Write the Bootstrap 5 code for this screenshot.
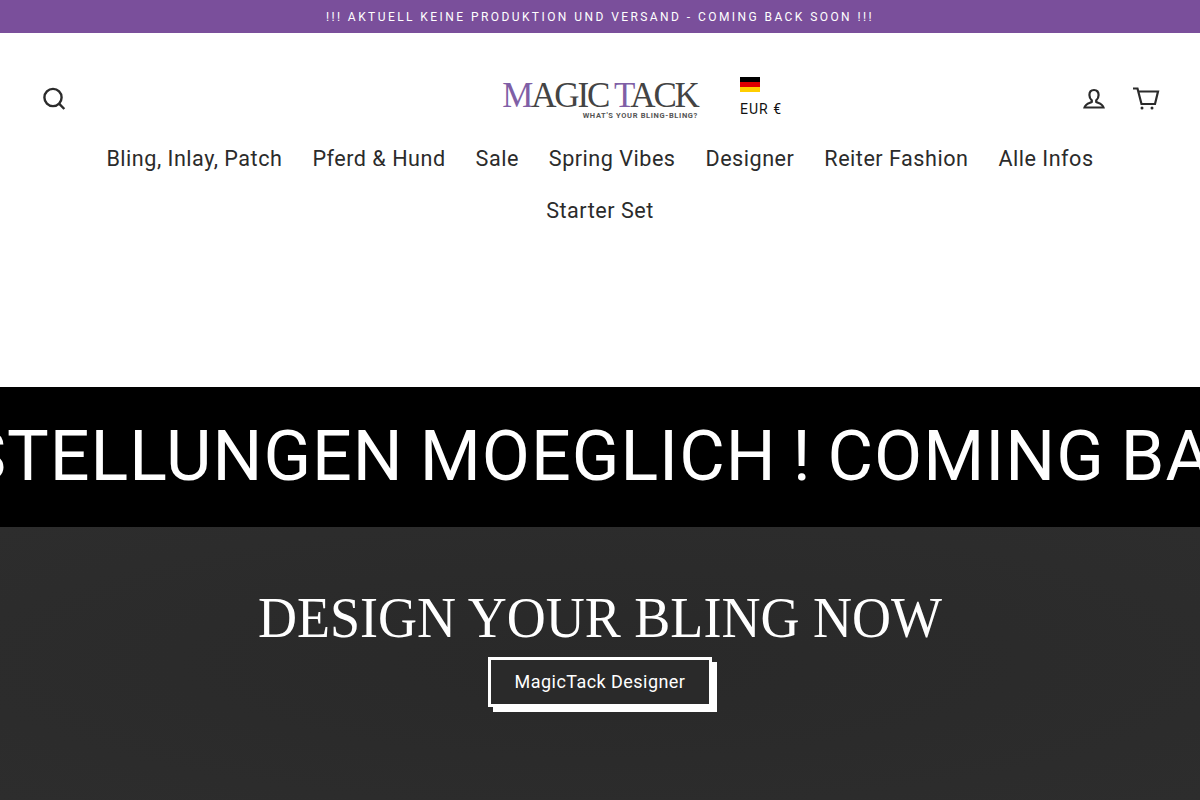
<!DOCTYPE html>
<html lang="de">
<head>
<meta charset="utf-8">
<title>Magic Tack</title>
<link href="https://cdn.jsdelivr.net/npm/bootstrap@5.3.0/dist/css/bootstrap.min.css" rel="stylesheet">
<style>
html,body{height:800px;overflow:hidden}
body{font-family:Roboto,"Liberation Sans",sans-serif;color:#2b2b2b;background:#fff}
.mt-announce{height:33px;background:#7a4f9b;color:#fff;font-size:12px;letter-spacing:2.43px;line-height:35px}
.mt-header{height:354px;padding:0 40px}
.mt-toprow{height:99px;padding-top:33px}
.mt-side{width:400px}
.mt-logo{width:200px;margin:0;color:#333;line-height:1}
.mt-logo-main{display:block;font-family:"Liberation Serif",serif;font-size:35px;line-height:30px;white-space:nowrap;letter-spacing:-2.2px;text-align:center;color:#444;margin-top:2px}
.mt-logo-main b{font-weight:400;color:#7f5fa6}
.mt-logo-tag{display:block;font-size:7.5px;font-weight:700;letter-spacing:.65px;text-align:right;color:#555;padding-right:2px;margin-top:1px}
.mt-locale{width:42px;margin-left:40px;margin-right:-82px;font-size:14px;letter-spacing:1px;color:#111;align-self:flex-start;margin-top:-1px;white-space:nowrap}
.mt-flag{width:20px;height:15px;display:block;margin-bottom:7px;background:linear-gradient(#000 33.3%,#d00 33.3%,#d00 66.6%,#ffce00 66.6%)}
.mt-icons{gap:26px}
.mt-nav{margin:0;padding:1px 0 0;list-style:none;font-size:21.6px;letter-spacing:.5px;line-height:52px;color:#2b2b2b}
.mt-nav li{padding:0 15px}
.mt-marquee{height:140px;background:#000;color:#fff;font-size:70px;line-height:139px;white-space:nowrap;overflow:hidden;letter-spacing:1px;word-spacing:-2.5px}
.mt-marquee span{display:block;margin-left:-121px}
.mt-hero{height:273px;background:radial-gradient(ellipse at center,#292929,#2d2d2d);color:#fff;padding-top:58px}
.mt-hero h2{font-family:"Liberation Serif",serif;font-size:58px;font-weight:400;line-height:66px;margin:0 0 6px;transform:scaleX(.932);white-space:nowrap}
.mt-cta{display:inline-block;width:224px;height:50px;border:3px solid #fff;background:#2a2a2a;color:#fff;font-size:18px;letter-spacing:.45px;line-height:44px;box-shadow:5px 5px 0 0 #fff;text-decoration:none}
</style>
</head>
<body>
<div class="mt-announce text-center">!!! AKTUELL KEINE PRODUKTION UND VERSAND - COMING BACK SOON !!!</div>
<header class="mt-header">
  <div class="mt-toprow d-flex align-items-center justify-content-between">
    <div class="mt-side d-flex">
      <svg width="28" height="28" viewBox="0 0 28 28" fill="none" stroke="#2b2b2b" stroke-width="2.4" aria-label="Suche"><circle cx="13" cy="12.5" r="8.6"/><path d="M19.3 18.800l5 5.200"/></svg>
    </div>
    <div class="d-flex align-items-center">
      <div class="mt-logo">
        <span class="mt-logo-main"><b>M</b>AGIC <b>T</b>ACK</span>
        <span class="mt-logo-tag">WHAT'S YOUR BLING-BLING?</span>
      </div>
      <div class="mt-locale"><span class="mt-flag"></span>EUR €</div>
    </div>
    <div class="mt-side d-flex justify-content-end align-items-center mt-icons">
      <svg width="24" height="24" viewBox="0 0 24 24" fill="none" stroke="#2b2b2b" stroke-width="2.2" aria-label="Konto"><path d="M12 3c-3 0-4.600 2.200-4.600 5 0 2.300 1 4.200 2.400 5.400v1.500c-1 1-6.300 1.500-7.300 5.600h19c-1-4.100-6.300-4.600-7.300-5.600v-1.500c1.400-1.200 2.400-3.100 2.400-5.400 0-2.800-1.600-5-4.600-5z"/></svg>
      <svg width="28" height="24" viewBox="0 0 28 24" fill="none" stroke="#2b2b2b" stroke-width="2.200" aria-label="Warenkorb"><path d="M1 1.500h4.500l4 15.500h13.500l3-12.500H6"/><circle cx="10" cy="21" r="1.500" fill="#2b2b2b" stroke="none"/><circle cx="20" cy="21" r="1.500" fill="#2b2b2b" stroke="none"/></svg>
    </div>
  </div>
  <ul class="mt-nav d-flex flex-wrap justify-content-center">
    <li>Bling, Inlay, Patch</li><li>Pferd &amp; Hund</li><li>Sale</li><li>Spring Vibes</li><li>Designer</li><li>Reiter Fashion</li><li>Alle Infos</li><li>Starter Set</li>
  </ul>
</header>
<div class="mt-marquee"><span>BESTELLUNGEN MOEGLICH ! COMING BACK SOON</span></div>
<section class="mt-hero text-center">
  <h2>DESIGN YOUR BLING NOW</h2>
  <a class="mt-cta" href="#">MagicTack Designer</a>
</section>
<script src="https://cdn.jsdelivr.net/npm/bootstrap@5.3.0/dist/js/bootstrap.bundle.min.js"></script>
</body>
</html>
